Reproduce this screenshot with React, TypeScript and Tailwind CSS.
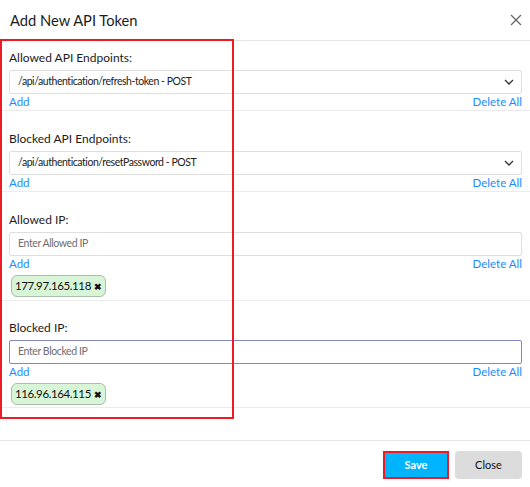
import React from "react";

function Chevron() {
  return (
    <svg width="10" height="6" viewBox="0 0 10 6" fill="none">
      <path d="M1 1l4 4 4-4" stroke="#333" strokeWidth="1.3" />
    </svg>
  );
}

function SelectBox({ value }: { value: string }) {
  return (
    <div className="h-[24px] border border-[#dedede] rounded-[2px] flex items-center justify-between pl-[8px] pr-[7px] text-[10.5px] tracking-[-0.45px] text-[#222]">
      <span>{value}</span>
      <Chevron />
    </div>
  );
}

function InputBox({ placeholder, focused }: { placeholder: string; focused?: boolean }) {
  return (
    <div
      className={
        "h-[24px] border rounded-[2px] flex items-center pl-[8px] text-[10.5px] tracking-[-0.4px] text-[#6f6f6f] " +
        (focused ? "border-[#8288bf]" : "border-[#dedede]")
      }
    >
      {placeholder}
    </div>
  );
}

function AddRow() {
  return (
    <div className="h-[16px] flex items-center justify-between text-[11.5px] text-[#1a8cff] leading-none">
      <span>Add</span>
      <span>Delete All</span>
    </div>
  );
}

function Chip({ ip }: { ip: string }) {
  return (
    <div className="ml-[2px] flex items-center h-[22px] px-[3px] bg-[#d8f5d8] border border-[#a9bfa9] rounded-[6px] text-[11.5px] tracking-[-0.4px] text-[#111] leading-none">
      <span>{ip}</span>
      <span className="ml-[3px] text-[9px] font-bold">✖</span>
    </div>
  );
}

function Label({ children }: { children: React.ReactNode }) {
  return <div className="h-[18px] leading-[18px] text-[12px] text-[#1c1c1c] mb-[3px]">{children}</div>;
}

export default function App() {
  return (
    <div
      className="relative w-[530px] h-[487px] bg-white overflow-hidden"
      style={{ fontFamily: "Lato, 'Open Sans', sans-serif" }}
    >
      {/* Header */}
      <div className="h-[41px] border-b border-[#e6e6e6] flex items-center justify-between pl-[10px] pr-[8px]">
        <span className="text-[14.7px] text-[#1c1c1c]">Add New API Token</span>
        <svg width="12" height="12" viewBox="0 0 12 12" fill="none">
          <path d="M1 1l10 10M11 1L1 11" stroke="#666" strokeWidth="1.3" />
        </svg>
      </div>

      {/* Body */}
      <div>
        <div className="border-b border-[#ececec] pt-[8px] pl-[9px] pr-[8px]">
          <Label>Allowed API Endpoints:</Label>
          <SelectBox value="/api/authentication/refresh-token - POST" />
          <AddRow />
        </div>
        <div className="border-b border-[#ececec] pt-[19px] pl-[9px] pr-[8px]">
          <Label>Blocked API Endpoints:</Label>
          <SelectBox value="/api/authentication/resetPassword - POST" />
          <AddRow />
        </div>
        <div className="border-b border-[#ececec] pt-[19px] pb-[3px] pl-[9px] pr-[8px]">
          <Label>Allowed IP:</Label>
          <InputBox placeholder="Enter Allowed IP" />
          <AddRow />
          <div className="mt-[3px] flex">
            <Chip ip="177.97.165.118" />
          </div>
        </div>
        <div className="border-b border-[#ececec] pt-[18px] pb-[2px] pl-[9px] pr-[8px]">
          <Label>Blocked IP:</Label>
          <InputBox placeholder="Enter Blocked IP" focused />
          <AddRow />
          <div className="mt-[3px] flex">
            <Chip ip="116.96.164.115" />
          </div>
        </div>
      </div>

      {/* Footer */}
      <div className="mt-[32px] border-t border-[#e6e6e6] flex justify-end gap-[6px] pt-[10px] pr-[8px]">
        <button className="w-[66px] h-[28px] bg-[#00b4ff] border-2 border-[#ed1c24] text-white text-[11px] font-bold">
          Save
        </button>
        <button className="w-[67px] h-[28px] bg-[#dcdcdc] rounded-[4px] text-[#111] text-[11px]">
          Close
        </button>
      </div>

      {/* Red annotation box */}
      <div className="absolute left-0 top-[39px] w-[234px] h-[380px] border-2 border-[#ed1c24] pointer-events-none" />
    </div>
  );
}
